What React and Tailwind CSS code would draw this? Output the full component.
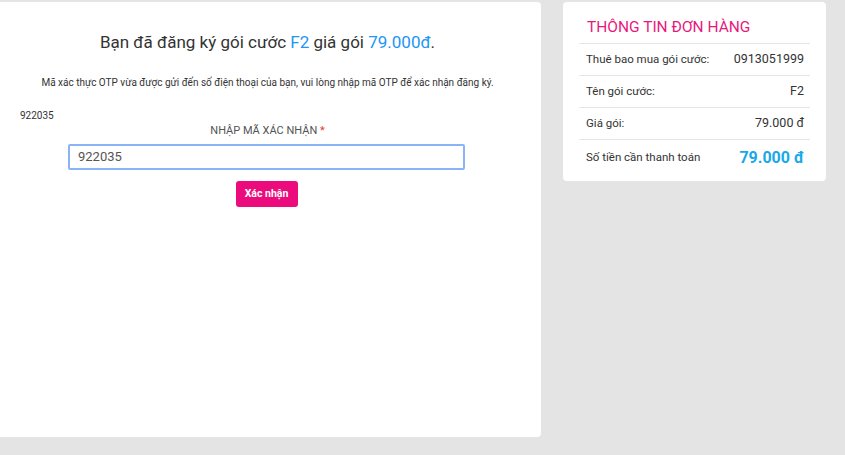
export default function App() {
  const font = { fontFamily: "Roboto, 'Noto Sans', sans-serif" };
  return (
    <div className="w-[845px] h-[455px] bg-[#e4e4e4] overflow-hidden" style={font}>
      <div className="flex items-start pt-[2px]">
        <div className="w-[541px] h-[435px] bg-white rounded-r-[4px] flex flex-col">
          <div className="mt-[28px] pr-[6px] text-center text-[17px] leading-[24px] text-[#333]">
            Bạn đã đăng ký gói cước <span className="text-[#2196f3]">F2</span> giá gói{" "}
            <span className="text-[#2196f3]">79.000đ</span>.
          </div>
          <div className="mt-[22px] pr-[6px] text-center text-[10px] leading-[14px] text-[#333]">
            Mã xác thực OTP vừa được gửi đến số điện thoại của bạn, vui lòng nhập mã OTP để xác nhận đăng ký.
          </div>
          <div className="mt-[20px] pl-[20px] text-[10px] leading-[12px] text-[#333]">922035</div>
          <div className="mt-[2px] pr-[6px] text-center text-[11px] leading-[14px] text-[#555] uppercase">
            NHẬP MÃ XÁC NHẬN <span className="text-[#e53935]">*</span>
          </div>
          <div className="mt-[6px] pl-[68px]">
            <div className="w-[397px] h-[26px] border-2 border-[#8ab4f8] rounded-[2px] flex items-center pl-[8px] text-[13px] text-[#555]">
              922035
            </div>
          </div>
          <div className="mt-[11px] flex justify-center pr-[8px]">
            <button className="w-[62px] h-[26px] bg-[#ec0b7c] rounded-[3px] text-white text-[10.5px] font-bold" style={font}>
              Xác nhận
            </button>
          </div>
        </div>
        <div className="ml-[22px] w-[263px] bg-white rounded-[4px] px-[16px] pt-[15px] pb-[5px]">
          <div className="pl-[8px] text-[15.5px] leading-[21px] text-[#e8197d] pb-[5px] border-b border-[#e6e6e6]">
            THÔNG TIN ĐƠN HÀNG
          </div>
          <div className="flex items-center justify-between h-[32px] pl-[7px] pr-[6px] border-b border-[#e6e6e6]">
            <span className="text-[11.5px] text-[#333]">Thuê bao mua gói cước:</span>
            <span className="text-[12.5px] text-[#333]">0913051999</span>
          </div>
          <div className="flex items-center justify-between h-[32px] pl-[7px] pr-[6px] border-b border-[#e6e6e6]">
            <span className="text-[11.5px] text-[#333]">Tên gói cước:</span>
            <span className="text-[12.5px] text-[#333]">F2</span>
          </div>
          <div className="flex items-center justify-between h-[32px] pl-[7px] pr-[6px] border-b border-[#e6e6e6]">
            <span className="text-[11.5px] text-[#333]">Giá gói:</span>
            <span className="text-[12.5px] text-[#333]">79.000 đ</span>
          </div>
          <div className="flex items-center justify-between h-[36px] pl-[7px] pr-[6px]">
            <span className="text-[11.5px] text-[#333]">Số tiền cần thanh toán</span>
            <span className="text-[16px] font-bold text-[#17a9e8]">79.000 đ</span>
          </div>
        </div>
      </div>
    </div>
  );
}
